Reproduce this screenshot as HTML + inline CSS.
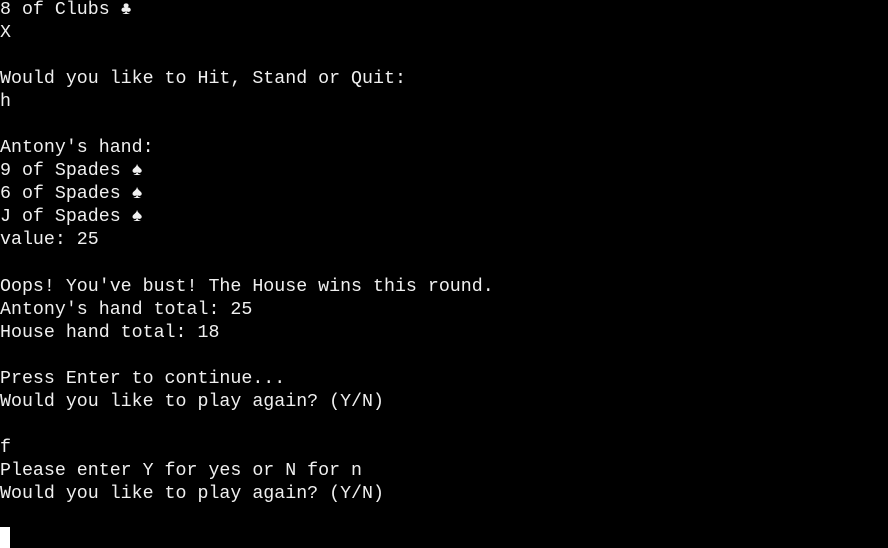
<!DOCTYPE html>
<html><head><meta charset="utf-8"><style>
html,body{margin:0;padding:0;background:#000;width:888px;height:548px;overflow:hidden}
pre{position:absolute;left:0;top:-1px;margin:0;font-family:"Liberation Mono","DejaVu Sans Mono",monospace;font-size:18.3px;line-height:23.05px;color:#f0f0f0;white-space:pre}
.cur{position:absolute;left:0;top:527px;width:10px;height:21px;background:#fff}
</style></head><body>
<pre>8 of Clubs ♣
X

Would you like to Hit, Stand or Quit:
h

Antony's hand:
9 of Spades ♠
6 of Spades ♠
J of Spades ♠
value: 25

Oops! You've bust! The House wins this round.
Antony's hand total: 25
House hand total: 18

Press Enter to continue...
Would you like to play again? (Y/N)

f
Please enter Y for yes or N for n
Would you like to play again? (Y/N)
</pre>
<div class="cur"></div>
</body></html>
